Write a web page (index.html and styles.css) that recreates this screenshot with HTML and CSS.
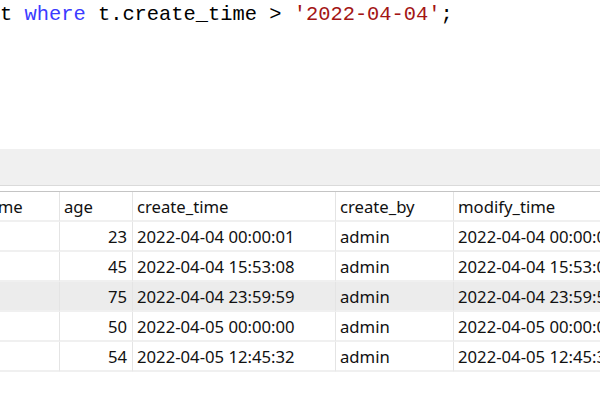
FILE: index.html
```html
<!DOCTYPE html>
<html lang="en">
<head>
    <meta charset="UTF-8">
    <title>查询结果</title>
    <link rel="stylesheet" href="styles.css">
</head>
<body>
    <div class="editor">
        <pre class="code">t <span class="kw">where</span> t.create_time &gt; <span class="str">'2022-04-04'</span>;</pre>
    </div>
    <div class="toolbar"></div>
    <div class="result">
        <table class="grid">
            <thead>
                <tr>
                    <th class="c0">name</th>
                    <th class="c1">age</th>
                    <th class="c2">create_time</th>
                    <th class="c3">create_by</th>
                    <th class="c4">modify_time</th>
                </tr>
            </thead>
            <tbody>
                <tr>
                    <td></td>
                    <td class="num">23</td>
                    <td>2022-04-04 00:00:01</td>
                    <td>admin</td>
                    <td>2022-04-04 00:00:01</td>
                </tr>
                <tr>
                    <td></td>
                    <td class="num">45</td>
                    <td>2022-04-04 15:53:08</td>
                    <td>admin</td>
                    <td>2022-04-04 15:53:08</td>
                </tr>
                <tr class="sel">
                    <td></td>
                    <td class="num">75</td>
                    <td>2022-04-04 23:59:59</td>
                    <td>admin</td>
                    <td>2022-04-04 23:59:59</td>
                </tr>
                <tr>
                    <td></td>
                    <td class="num">50</td>
                    <td>2022-04-05 00:00:00</td>
                    <td>admin</td>
                    <td>2022-04-05 00:00:00</td>
                </tr>
                <tr>
                    <td></td>
                    <td class="num">54</td>
                    <td>2022-04-05 12:45:32</td>
                    <td>admin</td>
                    <td>2022-04-05 12:45:32</td>
                </tr>
            </tbody>
        </table>
    </div>
</body>
</html>
```

FILE: styles.css
```css
*{
    margin: 0;
    padding: 0;
}
html,body{
    width: 600px;
    height: 400px;
    overflow: hidden;
    background: #fff;
}
.editor{
    height: 149px;
}
.code{
    font-family: "Liberation Mono", "DejaVu Sans Mono", monospace;
    font-size: 20.4px;
    line-height: 24px;
    padding-top: 3px;
    color: #000;
}
.kw{
    color: #3b3bff;
}
.str{
    color: #a31515;
}
.toolbar{
    height: 36px;
    background: #f0f0f0;
    border-bottom: 1px solid #dadada;
}
.result{
    margin-top: 5px;
    border-top: 1px solid #c4c4c4;
    overflow: hidden;
}
.grid{
    margin-left: -26px;
    border-collapse: separate;
    border-spacing: 0;
    table-layout: fixed;
    width: 698px;
    font-family: "Noto Sans", "Noto Sans CJK SC", sans-serif;
    font-size: 16.7px;
    color: #111;
}
.grid th,.grid td{
    box-sizing: border-box;
    height: 30px;
    padding: 0 4px;
    border-right: 1px solid #e4e4e4;
    border-bottom: 2px solid #f0f0f0;
    font-weight: normal;
    text-align: left;
    white-space: nowrap;
    overflow: hidden;
}
.grid .c0{ width: 86px; }
.grid .c1{ width: 73px; }
.grid .c2{ width: 203px; }
.grid .c3{ width: 118px; }
.grid .c4{ width: 218px; }
.grid td.num{
    text-align: right;
    padding-right: 5px;
}
.grid tr.sel td{
    background: #ececec;
}
```
